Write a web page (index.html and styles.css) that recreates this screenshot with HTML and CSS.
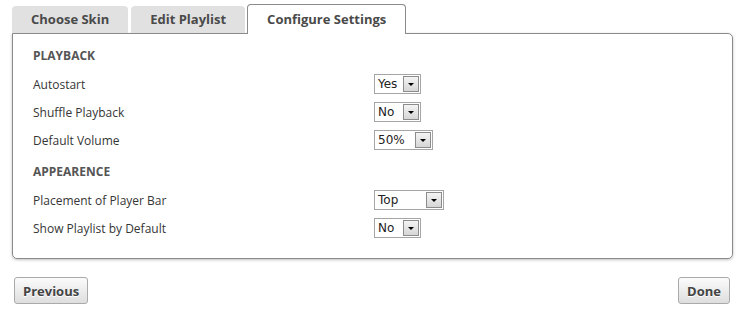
FILE: index.html
```html
<!DOCTYPE html>
<html lang="en">
<head>
  <meta charset="UTF-8">
  <title>Player Settings</title>
  <link rel="stylesheet" href="styles.css">
</head>
<body>

  <div class="wizard">
    <div class="tabs">
      <div class="tab">Choose Skin</div>
      <div class="tab">Edit Playlist</div>
      <div class="tab active">Configure Settings</div>
    </div>

    <div class="panel">
      <h4>Playback</h4>
      <div class="row">
        <span class="label">Autostart</span>
        <span class="select w-yes"><span class="value">Yes</span><span class="arrow"></span></span>
      </div>
      <div class="row">
        <span class="label">Shuffle Playback</span>
        <span class="select w-yes"><span class="value">No</span><span class="arrow"></span></span>
      </div>
      <div class="row">
        <span class="label">Default Volume</span>
        <span class="select w-vol"><span class="value">50%</span><span class="arrow"></span></span>
      </div>

      <h4 class="spaced">Appearence</h4>
      <div class="row">
        <span class="label">Placement of Player Bar</span>
        <span class="select w-top"><span class="value">Top</span><span class="arrow"></span></span>
      </div>
      <div class="row">
        <span class="label">Show Playlist by Default</span>
        <span class="select w-yes"><span class="value">No</span><span class="arrow"></span></span>
      </div>
    </div>

    <div class="footer">
      <button class="btn">Previous</button>
      <button class="btn">Done</button>
    </div>
  </div>

</body>
</html>
```

FILE: styles.css
```css
body {
  margin: 0;
  background: #fff;
  font-family: "Open Sans", Arial, sans-serif;
  font-size: 12px;
  color: #444;
}

.wizard {
  width: 721px;
  padding: 5px 0 0 12px;
}

/* tabs */
.tabs {
  display: flex;
  align-items: flex-end;
  gap: 3px;
  height: 28px;
  position: relative;
  z-index: 1;
}

.tab {
  height: 27px;
  line-height: 27px;
  padding: 0 19px;
  white-space: nowrap;
  background: #e1e1e1;
  border-radius: 4px 4px 0 0;
  font-weight: bold;
  font-size: 13px;
  color: #4a4a4a;
}

.tab.active {
  margin-left: -1px;
  background: #fff;
  border: 1px solid #8a8a8a;
  border-bottom: none;
  margin-bottom: -1px;
  height: 29px;
  line-height: 28px;
}

/* panel */
.panel {
  border: 1px solid #8a8a8a;
  border-radius: 0 5px 5px 5px;
  padding: 12px 20px 16px;
  box-shadow: 0 1px 3px rgba(0, 0, 0, 0.25);
}

h4 {
  margin: 0 0 4px;
  height: 20px;
  line-height: 20px;
  font-size: 12px;
  text-transform: uppercase;
  color: #555;
}

h4.spaced {
  margin-top: 8px;
}

.row {
  display: grid;
  grid-template-columns: 341px auto;
  align-items: center;
  height: 28px;
}

.label {
  color: #363636;
}

/* old style drop downs */
.select {
  display: inline-flex;
  justify-content: space-between;
  align-items: center;
  height: 16px;
  border: 1px solid #a5a5a5;
  background: #fff;
  padding: 1px;
  font-family: "DejaVu Sans", Verdana, sans-serif;
  font-size: 12px;
  color: #222;
  justify-self: start;
}

.w-yes { width: 43px; }
.w-vol { width: 55px; }
.w-top { width: 66px; }

.value {
  padding-left: 2px;
}

.arrow {
  width: 14px;
  height: 14px;
  border: 1px solid #8c8c8c;
  background: linear-gradient(#f4f4f4, #d6d6d6);
  position: relative;
}

.arrow::after {
  content: "";
  position: absolute;
  left: 4px;
  top: 6px;
  border-left: 3px solid transparent;
  border-right: 3px solid transparent;
  border-top: 3px solid #000;
}

/* buttons */
.footer {
  display: flex;
  justify-content: space-between;
  margin-top: 18px;
  padding: 0 3px 0 2px;
}

.btn {
  height: 27px;
  padding: 0 8px;
  border: 1px solid #aaa;
  border-radius: 3px;
  background: linear-gradient(#fbfbfb, #dedede);
  font-family: "Open Sans", Arial, sans-serif;
  font-size: 13px;
  font-weight: bold;
  color: #444;
  text-shadow: 0 1px 0 #fff;
  cursor: pointer;
}
```
